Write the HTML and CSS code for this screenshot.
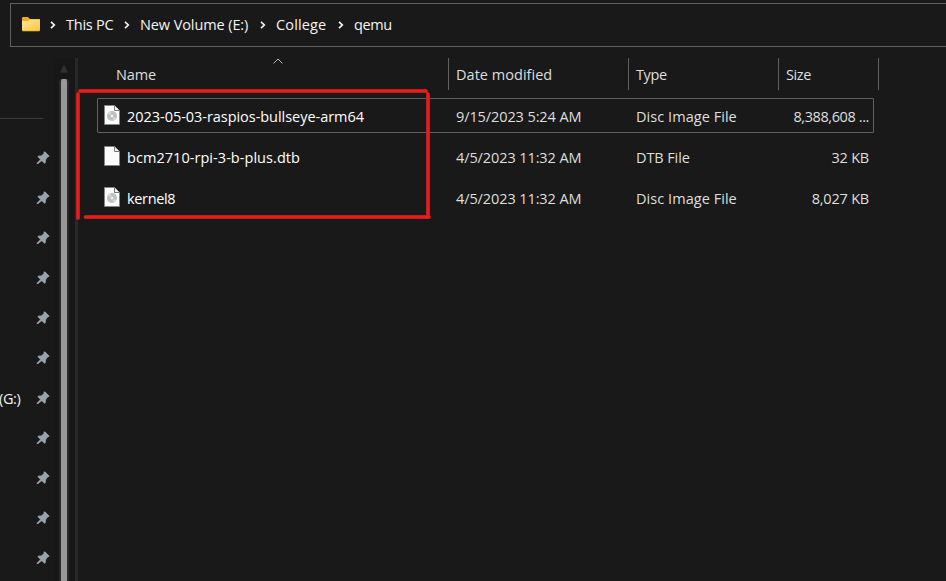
FILE: index.html
```html
<!DOCTYPE html>
<html lang="en">
<head>
<meta charset="utf-8">
<title>qemu</title>
<link rel="stylesheet" href="styles.css">
</head>
<body>
<svg class="defs" width="0" height="0">
  <symbol id="chev" viewBox="0 0 6 8"><path d="M1 .8 4.3 4 1 7.2" fill="none" stroke="#f4f4f4" stroke-width="1.7"/></symbol>
  <symbol id="pin" viewBox="0 0 14 14"><path d="M7.7.5 9.2.7 13.2 4.7V6L12 6.1 9.9 8.7 9.7 11.8 8.7 12.8 5.6 9.9 2 13 .8 12.9.7 12 4.2 8.5 1.5 5.7 2.3 4.7 5.5 4.5 7.6 2.5Z" fill="#98a4ac"/></symbol>
  <symbol id="file" viewBox="0 0 16 20"><path d="M.5.5H10.5L15.5 5.5V19.5H.5Z" fill="#fbfbfb" stroke="#858585"/><path d="M10.5.5V5.5H15.5" fill="#eee" stroke="#777"/></symbol>
  <symbol id="disc" viewBox="0 0 16 20"><use href="#file" width="16" height="20"/><circle cx="8" cy="11" r="5" fill="#bcc3c3"/><path d="M8 11 3.6 8.6A5 5 0 0 1 6.2 6.4ZM8 11 12.4 13.4A5 5 0 0 1 9.8 15.6Z" fill="#d9dddc"/><circle cx="8" cy="11" r="2" fill="#edf0f0" stroke="#aab2b2" stroke-width=".7"/></symbol>
</svg>
<div class="window">
  <nav class="address">
    <svg class="folder" width="18" height="15" viewBox="0 0 18 15"><defs><linearGradient id="g" x2="1" y2="1"><stop stop-color="#ffe49a"/><stop offset="1" stop-color="#ffc83c"/></linearGradient></defs><path d="M0 1Q0 0 1 0H6L8 2H17Q18 2 18 3V8H0Z" fill="#f0ad16"/><path d="M0 4H6L8 2.6H18V13Q18 14 17 14H1Q0 14 0 13Z" fill="url(#g)"/><path d="M.5 14H17.5" stroke="#d99c24" stroke-width=".7"/></svg>
    <svg class="chev"><use href="#chev"/></svg><span class="crumb pc">This PC</span>
    <svg class="chev"><use href="#chev"/></svg><span class="crumb vol">New Volume (E:)</span>
    <svg class="chev"><use href="#chev"/></svg><span class="crumb col">College</span>
    <svg class="chev"><use href="#chev"/></svg><span class="crumb">qemu</span>
  </nav>
  <div class="body">
    <aside class="side">
      <div class="rule"></div>
      <div class="pinned"><svg><use href="#pin"/></svg></div>
      <div class="pinned"><svg><use href="#pin"/></svg></div>
      <div class="pinned"><svg><use href="#pin"/></svg></div>
      <div class="pinned"><svg><use href="#pin"/></svg></div>
      <div class="pinned"><svg><use href="#pin"/></svg></div>
      <div class="pinned"><svg><use href="#pin"/></svg></div>
      <div class="pinned"><span>(G:)</span><svg><use href="#pin"/></svg></div>
      <div class="pinned"><svg><use href="#pin"/></svg></div>
      <div class="pinned"><svg><use href="#pin"/></svg></div>
      <div class="pinned"><svg><use href="#pin"/></svg></div>
      <div class="pinned"><svg><use href="#pin"/></svg></div>
    </aside>
    <div class="scroll"><svg width="10" height="8" viewBox="0 0 10 8"><path d="M1 7.5 4 1Q5 0 6 1L9 7.5Z" fill="#303030"/></svg><div class="thumb"></div></div>
    <main class="files">
      <div class="head"><div class="h-name"><span>Name</span><svg class="sort" width="10" height="6" viewBox="0 0 10 6"><path d="M.6 5.4 5 1 9.4 5.4" fill="none" stroke="#bbb"/></svg></div><div class="h-date"><span>Date modified</span></div><div class="h-type"><span>Type</span></div><div class="h-size"><span>Size</span></div></div>
      <div class="row selected"><svg class="icon"><use href="#disc"/></svg><div class="name">2023-05-03-raspios-bullseye-arm64</div><div class="date">9/15/2023 5:24 AM</div><div class="type">Disc Image File</div><div class="size long">8,388,608 ...</div></div>
      <div class="row"><svg class="icon"><use href="#file"/></svg><div class="name dtb">bcm2710-rpi-3-b-plus.dtb</div><div class="date">4/5/2023 11:32 AM</div><div class="type short">DTB File</div><div class="size">32 KB</div></div>
      <div class="row"><svg class="icon"><use href="#disc"/></svg><div class="name kernel">kernel8</div><div class="date">4/5/2023 11:32 AM</div><div class="type">Disc Image File</div><div class="size">8,027 KB</div></div>
    </main>
  </div>
  <svg class="mark" width="356" height="132" viewBox="0 0 356 132"><g fill="none" stroke-linecap="round"><path d="M4 2H350M352 5V126M9.5 128H353M2 5V129" stroke="#a01818" stroke-width="4"/><path d="M4 2H350M352 5V126M9.5 128H353M2 5V129" stroke="#e81c1c" stroke-width="3"/></g></svg>
</div>
</body>
</html>
```
FILE: styles.css
```css
* { box-sizing: border-box; }
body { margin: 0; background: #191919; color: #dedede; font: 14.5px/20px "Open Sans", "Noto Sans", sans-serif; letter-spacing: -.4px; white-space: nowrap; overflow: hidden; }
svg { display: block; flex: none; }
.defs { position: absolute; }
.window { position: relative; width: 946px; height: 581px; display: flex; flex-direction: column; overflow: hidden; }
.address { margin: 3px 0 0 10px; height: 44px; flex: none; border: 1px solid #606060; border-right: 0; display: flex; align-items: center; padding-left: 11px; color: #f4f4f4; }
.folder { margin-top: -1px; }
.chev { width: 6px; height: 8px; margin: 0 10px; }
.crumb.pc { width: 48px; letter-spacing: -.25px; }
.crumb.vol { width: 110px; letter-spacing: -.1px; }
.crumb.col { width: 52px; letter-spacing: .15px; }
.body { display: flex; flex: 1; margin-top: 11px; }
.side { width: 53px; padding-top: 60px; }
.rule { width: 43px; height: 1px; background: #3b3b3b; margin-bottom: 19px; }
.pinned { height: 40px; display: flex; align-items: center; justify-content: flex-end; padding-right: 3px; color: #f2f2f2; }
.pinned span { width: 37px; margin: 1px 1px 0 -1px; }
.pinned svg { width: 14px; height: 14px; }
.scroll { width: 25px; background: linear-gradient(to right, #171717 22px, #282828 22px); padding: 7px 0 0 6px; display: flex; flex-direction: column; }
.thumb { width: 10px; flex: 1; margin-top: 6px; border: solid #292929; border-width: 0 2px; background: #989898; border-radius: 3px 3px 0 0; }
.files { padding-left: 19px; }
.head { display: flex; height: 40px; align-items: flex-start; }
.head > div { height: 32px; padding-top: 7px; border-right: 1px solid #606060; position: relative; }
.head .h-name { width: 352px; padding-left: 19px; letter-spacing: -.15px; }
.head .h-date { width: 180px; padding-left: 7px; letter-spacing: .03px; }
.h-type { width: 150px; padding-left: 7px; }
.h-size { width: 100px; padding-left: 7px; }
.sort { position: absolute; left: 176px; top: 0; }
.row { width: 777px; height: 35px; margin-bottom: 6px; border: 1px solid transparent; border-radius: 1px; display: flex; align-items: center; padding: 2px 0 0 6px; }
.selected { border-color: #606060; }
.icon { width: 16px; height: 20px; margin-top: -4px; }
.name { width: 336px; padding-left: 7px; color: #fff; letter-spacing: -.04px; }
.dtb { letter-spacing: .05px; }
.kernel { letter-spacing: -.35px; }
.date { width: 180px; letter-spacing: -.1px; }
.type { width: 150px; letter-spacing: .05px; }
.short { letter-spacing: -.1px; }
.size { width: 83px; text-align: right; letter-spacing: -.2px; }
.long { letter-spacing: -.4px; }
.mark { position: absolute; left: 76px; top: 89px; }
```
